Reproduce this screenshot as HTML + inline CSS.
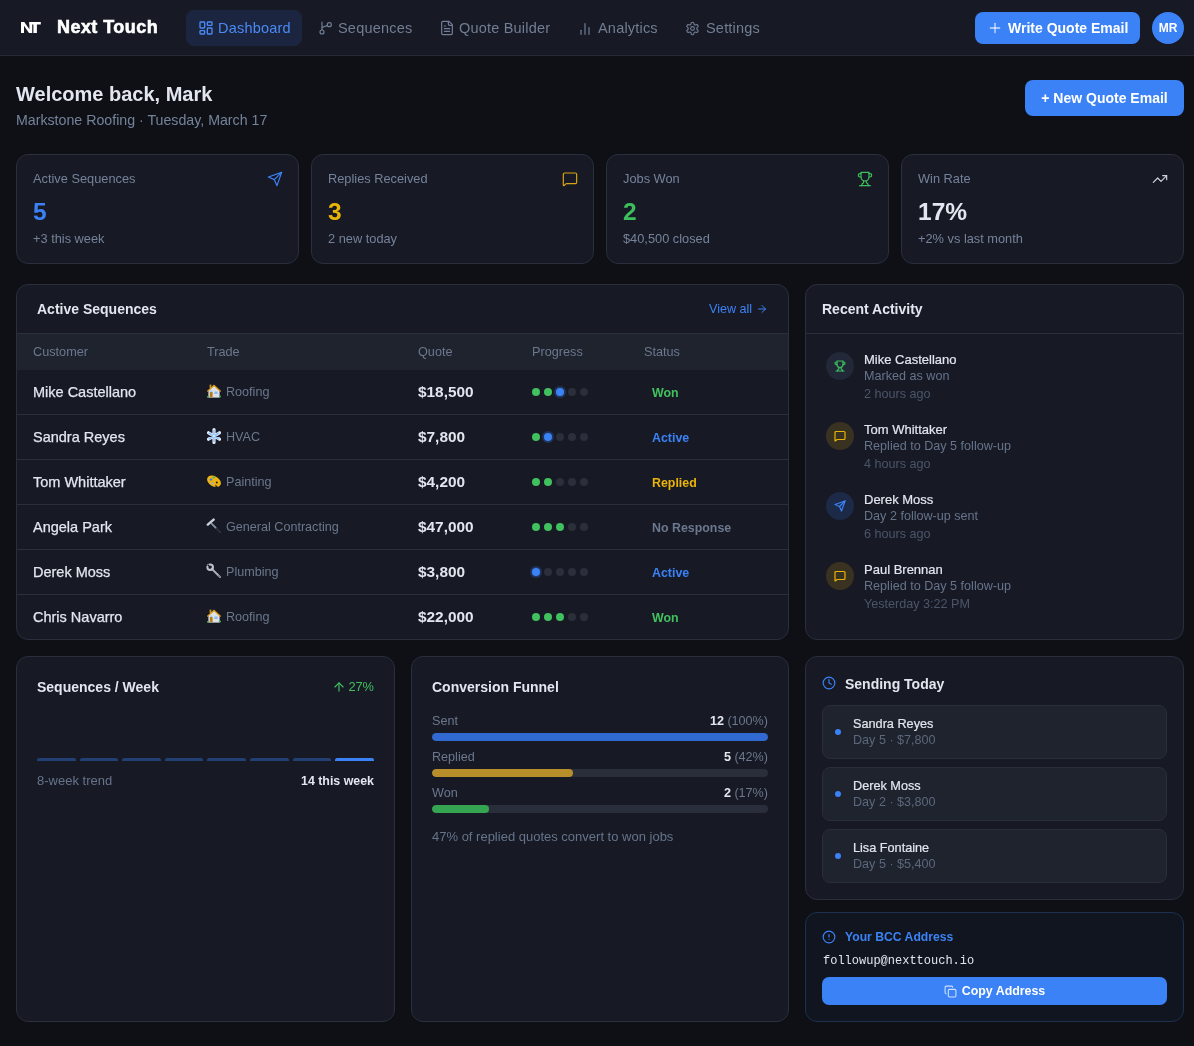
<!DOCTYPE html>
<html><head><meta charset="utf-8"><style>
*{box-sizing:border-box;margin:0;padding:0}
html,body{width:1194px;height:1046px;overflow:hidden}
body{will-change:transform;background:#0e1016;font-family:"Liberation Sans",sans-serif;color:#e2e6ee;position:relative}
svg{display:block}
.a{position:absolute;white-space:nowrap}
#hdr{position:absolute;left:0;top:0;width:1194px;height:56px;background:#171925;border-bottom:1px solid #262a36}
.nav{position:absolute;top:10px;height:36px;border-radius:8px;font-size:14.5px;color:#717e94;white-space:nowrap;letter-spacing:0.2px}
.nav svg{position:absolute;left:12px;top:10px}
.nav span{position:absolute;left:32px;top:8px;line-height:20px}
.nav.act{background:#1b2540;color:#4a8af5}
.btn{position:absolute;background:#3b82f6;color:#fff;font-weight:700;border-radius:8px;display:flex;align-items:center;justify-content:center;white-space:nowrap}
.card{position:absolute;background:#171925;border:1px solid #292f3d;border-radius:12px;overflow:hidden}
.stat .lbl{position:absolute;left:16px;top:16px;font-size:12.8px;line-height:16px;color:#75839a;white-space:nowrap}
.stat .ico{position:absolute;right:15px;top:16px}
.stat .val{position:absolute;left:16px;top:41px;font-size:24.5px;line-height:32px;font-weight:700}
.stat .sub{position:absolute;left:16px;top:76px;font-size:12.8px;line-height:16px;color:#75839a;white-space:nowrap}
.ttl{font-size:14px;line-height:20px;font-weight:700;color:#e2e6ee;white-space:nowrap}
.thdr{position:absolute;left:0;top:0;width:100%;height:49px;border-bottom:1px solid #292f3d}
.thead{position:absolute;left:0;top:49px;width:100%;height:36px;background:#1f232e;font-size:12.7px;color:#6b788d}
.thead span{position:absolute;top:10px;line-height:16px;white-space:nowrap}
.row{position:absolute;left:0;width:100%;height:45px;border-top:1px solid #292f3d}
.row.first{border-top:none;height:44px}
.row .nm{position:absolute;left:16px;top:12px;font-size:14.5px;line-height:20px;color:#e2e6ee;-webkit-text-stroke:0.25px #e2e6ee;white-space:nowrap}
.row .tr{position:absolute;left:190px;top:14px;font-size:12.6px;line-height:16px;color:#6b788d;white-space:nowrap}
.row .tr svg{position:absolute;left:-1px;top:-1px}
.row .tr span{position:absolute;left:19px;top:0}
.row .q{position:absolute;left:401px;top:12px;font-size:15.4px;line-height:20px;font-weight:700;color:#e2e6ee;white-space:nowrap}
.row .pr{position:absolute;left:515px;top:18px;display:flex}
.dot{width:8px;height:8px;border-radius:50%;background:#2b2f3b;margin-right:4px}
.dot.g{background:#41c05e}
.dot.b{background:#3b82f6;box-shadow:0 0 0 2px rgba(59,130,246,0.25)}
.row .st{position:absolute;left:635px;top:15px;font-size:12.4px;line-height:16px;font-weight:700;white-space:nowrap}
.aitem{position:absolute;left:20px;width:330px;height:56px}
.aitem .circ{position:absolute;left:0;top:0;width:28px;height:28px;border-radius:50%;display:flex;align-items:center;justify-content:center}
.aitem .an{position:absolute;left:38px;top:-1px;font-size:13px;line-height:18px;color:#e2e6ee;-webkit-text-stroke:0.2px #e2e6ee;white-space:nowrap}
.aitem .ad{position:absolute;left:38px;top:16px;font-size:12.6px;line-height:16px;color:#66748a;white-space:nowrap}
.aitem .at{position:absolute;left:38px;top:34px;font-size:12.6px;line-height:16px;color:#4b5669;white-space:nowrap}
.bcard{top:656px;height:366px}
.sitem{position:absolute;left:16px;width:345px;height:54px;background:#1f232e;border:1px solid #2a2e3a;border-radius:8px}
.sitem .sd{position:absolute;left:12px;top:23px;width:6px;height:6px;border-radius:50%;background:#3b82f6}
.sitem .sn{position:absolute;left:30px;top:9px;font-size:12.7px;line-height:18px;color:#e2e6ee;-webkit-text-stroke:0.2px #e2e6ee;white-space:nowrap}
.sitem .ss{position:absolute;left:30px;top:26px;font-size:12.6px;line-height:16px;color:#5b687c;white-space:nowrap}
.flbl{position:absolute;left:20px;font-size:12.6px;line-height:16px;color:#6b788d;white-space:nowrap}
.fval{position:absolute;right:20px;font-size:12.6px;line-height:16px;color:#6b788d;white-space:nowrap}
.fval b{color:#e2e6ee}
.ftrack{position:absolute;left:20px;width:336px;height:8px;border-radius:4px;background:#2a2e3a;overflow:hidden}
.ftrack div{height:8px;border-radius:4px}
.wbar{position:absolute;top:101px;width:38.6px;height:3px;border-radius:2px 2px 0 0;background:#234075}
</style></head><body>
<div id="hdr">
<svg class="a" style="left:21px;top:22px" width="20" height="11" viewBox="0 0 20 11"><path fill="#fff" d="M0 0H3.3L8.4 7.2V0H11.2V11H8L3 3.8V11H0Z"/><path fill="#fff" d="M8.4 0H19.8V2.6H15.9V11H12.4V2.6H8.4Z"/></svg>
<div class="a" style="left:57px;top:17px;font-size:18px;line-height:20px;font-weight:700;color:#fff;letter-spacing:0.45px;-webkit-text-stroke:0.6px #fff">Next Touch</div>
<div class="nav act" style="left:186px;width:116px"><svg width="16" height="16" viewBox="0 0 24 24" fill="none" stroke="currentColor" stroke-width="2" stroke-linecap="round" stroke-linejoin="round" style=""><rect x="3" y="3" width="7" height="9" rx="1"/><rect x="14" y="3" width="7" height="5" rx="1"/><rect x="14" y="12" width="7" height="9" rx="1"/><rect x="3" y="16" width="7" height="5" rx="1"/></svg><span>Dashboard</span></div>
<div class="nav" style="left:306px;width:116px"><svg width="16" height="16" viewBox="0 0 24 24" fill="none" stroke="currentColor" stroke-width="1.8" stroke-linecap="round" stroke-linejoin="round" style=""><line x1="6" y1="3" x2="6" y2="15"/><circle cx="6" cy="18" r="3"/><circle cx="17" cy="7" r="3"/><path d="M14.2 8.4C11 9.2 7.6 9.8 6 11.6"/></svg><span>Sequences</span></div>
<div class="nav" style="left:427px;width:136px"><svg width="16" height="16" viewBox="0 0 24 24" fill="none" stroke="currentColor" stroke-width="1.8" stroke-linecap="round" stroke-linejoin="round" style=""><path d="M15 2H6a2 2 0 0 0-2 2v16a2 2 0 0 0 2 2h12a2 2 0 0 0 2-2V7Z"/><path d="M14 2v4a2 2 0 0 0 2 2h4"/><path d="M10 9H8"/><path d="M16 13H8"/><path d="M16 17H8"/></svg><span>Quote Builder</span></div>
<div class="nav" style="left:566px;width:106px"><svg width="16" height="16" viewBox="0 0 24 24" fill="none" stroke="currentColor" stroke-width="1.8" stroke-linecap="round" stroke-linejoin="round" style="margin-left:-1px;margin-top:0.5px"><line x1="18" y1="20" x2="18" y2="10"/><line x1="12" y1="20" x2="12" y2="4"/><line x1="6" y1="20" x2="6" y2="14"/></svg><span>Analytics</span></div>
<div class="nav" style="left:674px;width:100px"><svg width="15" height="15" viewBox="0 0 24 24" fill="none" stroke="currentColor" stroke-width="1.8" stroke-linecap="round" stroke-linejoin="round" style="margin-left:-1px;margin-top:0.5px"><path d="M12.22 2h-.44a2 2 0 0 0-2 2v.18a2 2 0 0 1-1 1.73l-.43.25a2 2 0 0 1-2 0l-.15-.08a2 2 0 0 0-2.73.73l-.22.38a2 2 0 0 0 .73 2.73l.15.1a2 2 0 0 1 1 1.72v.51a2 2 0 0 1-1 1.74l-.15.09a2 2 0 0 0-.73 2.73l.22.38a2 2 0 0 0 2.73.73l.15-.08a2 2 0 0 1 2 0l.43.25a2 2 0 0 1 1 1.73V20a2 2 0 0 0 2 2h.44a2 2 0 0 0 2-2v-.18a2 2 0 0 1 1-1.73l.43-.25a2 2 0 0 1 2 0l.15.08a2 2 0 0 0 2.73-.73l.22-.39a2 2 0 0 0-.73-2.73l-.15-.08a2 2 0 0 1-1-1.74v-.5a2 2 0 0 1 1-1.74l.15-.09a2 2 0 0 0 .73-2.73l-.22-.38a2 2 0 0 0-2.73-.73l-.15.08a2 2 0 0 1-2 0l-.43-.25a2 2 0 0 1-1-1.73V4a2 2 0 0 0-2-2z"/><circle cx="12" cy="12" r="3"/></svg><span>Settings</span></div>
<div class="btn" style="left:975px;top:12px;width:165px;height:32px;justify-content:flex-start;padding-left:12px;font-size:14px"><svg width="16" height="16" viewBox="0 0 24 24" fill="none" stroke="rgba(255,255,255,0.72)" stroke-width="2" stroke-linecap="round" stroke-linejoin="round" style=""><path d="M5 12h14"/><path d="M12 5v14"/></svg><span style="margin-left:5px">Write Quote Email</span></div>
<div class="a" style="left:1152px;top:12px;width:32px;height:32px;border-radius:50%;background:#3b82f6;color:#fff;font-size:12px;font-weight:700;display:flex;align-items:center;justify-content:center">MR</div>
</div>
<div class="a" style="left:16px;top:80px;font-size:20px;line-height:28px;font-weight:700;color:#e2e6ee">Welcome back, Mark</div>
<div class="a" style="left:16px;top:110px;font-size:14.2px;line-height:20px;color:#75839a">Markstone Roofing · Tuesday, March 17</div>
<div class="btn" style="left:1025px;top:80px;width:159px;height:36px;font-size:14px">+ New Quote Email</div>
<div class="card stat" style="left:16px;top:154px;width:283px;height:110px"><div class="lbl">Active Sequences</div><div class="ico"><svg width="16" height="16" viewBox="0 0 24 24" fill="none" stroke="#3b82f6" stroke-width="1.8" stroke-linecap="round" stroke-linejoin="round" style=""><path d="m22 2-7 20-4-9-9-4Z"/><path d="M22 2 11 13"/></svg></div><div class="val" style="color:#3b82f6">5</div><div class="sub">+3 this week</div></div>
<div class="card stat" style="left:311px;top:154px;width:283px;height:110px"><div class="lbl">Replies Received</div><div class="ico"><svg width="16" height="16" viewBox="0 0 24 24" fill="none" stroke="#d9a514" stroke-width="1.8" stroke-linecap="round" stroke-linejoin="round" style=""><path d="M22 17a2 2 0 0 1-2 2H6.828a2 2 0 0 0-1.414.586l-2.202 2.202A.71.71 0 0 1 2 21.286V5a2 2 0 0 1 2-2h16a2 2 0 0 1 2 2z"/></svg></div><div class="val" style="color:#eab308">3</div><div class="sub">2 new today</div></div>
<div class="card stat" style="left:606px;top:154px;width:283px;height:110px"><div class="lbl">Jobs Won</div><div class="ico"><svg width="16" height="16" viewBox="0 0 24 24" fill="none" stroke="#3dbf5c" stroke-width="1.8" stroke-linecap="round" stroke-linejoin="round" style=""><path d="M6 9H4.5a2.5 2.5 0 0 1 0-5H6"/><path d="M18 9h1.5a2.5 2.5 0 0 0 0-5H18"/><path d="M4 22h16"/><path d="M10 14.66V17c0 .55-.47.98-.97 1.21C7.85 18.75 7 20.24 7 22"/><path d="M14 14.66V17c0 .55.47.98.97 1.21C16.15 18.75 17 20.24 17 22"/><path d="M18 2H6v7a6 6 0 0 0 12 0V2Z"/></svg></div><div class="val" style="color:#3dbf5c">2</div><div class="sub">$40,500 closed</div></div>
<div class="card stat" style="left:901px;top:154px;width:283px;height:110px"><div class="lbl">Win Rate</div><div class="ico"><svg width="16" height="16" viewBox="0 0 24 24" fill="none" stroke="#cbd2dc" stroke-width="1.8" stroke-linecap="round" stroke-linejoin="round" style=""><polyline points="22 7 13.5 15.5 8.5 10.5 2 17"/><polyline points="16 7 22 7 22 13"/></svg></div><div class="val" style="color:#e2e6ee">17%</div><div class="sub">+2% vs last month</div></div>
<div class="card" style="left:16px;top:284px;width:773px;height:356px">
<div class="thdr"><div class="a ttl" style="left:20px;top:14px">Active Sequences</div><div class="a" style="left:692px;top:16px;font-size:12.6px;line-height:16px;color:#3b82f6;display:flex;align-items:center">View all<svg width="12" height="12" viewBox="0 0 24 24" fill="none" stroke="currentColor" stroke-width="2" stroke-linecap="round" stroke-linejoin="round" style="margin-left:4px"><path d="M5 12h14"/><path d="m12 5 7 7-7 7"/></svg></div></div>
<div class="thead"><span style="left:16px">Customer</span><span style="left:190px">Trade</span><span style="left:401px">Quote</span><span style="left:515px">Progress</span><span style="left:627px">Status</span></div>
<div class="row first" style="top:85px"><div class="nm">Mike Castellano</div><div class="tr"><svg width="16" height="16" viewBox="0 0 16 16"><rect x="3.6" y="1.6" width="1.8" height="3.4" fill="#c9901a"/><path d="M2.4 7.2L8 2.6 13.6 7.2V14.6H2.4Z" fill="#dfe1e6"/><path d="M0.9 8.1L8 1.6 15.1 8.1 14.2 8.9 8 3.3 1.8 8.9Z" fill="#d49a16"/><rect x="3.8" y="9" width="2.8" height="5.6" fill="#b57a14"/><circle cx="5.2" cy="8.3" r="0.9" fill="#8ec3ff"/><rect x="8.4" y="8.6" width="3.2" height="2.4" fill="#84b9f6"/><ellipse cx="1.9" cy="13.8" rx="1.1" ry="0.9" fill="#3fb24f"/><ellipse cx="14" cy="13.4" rx="1.1" ry="0.9" fill="#3fb24f"/><rect x="2.4" y="14.4" width="11.2" height="0.6" fill="#9aa3b0"/></svg><span>Roofing</span></div><div class="q">$18,500</div><div class="pr"><div class="dot g"></div><div class="dot g"></div><div class="dot b"></div><div class="dot "></div><div class="dot "></div></div><div class="st" style="color:#41c05e">Won</div></div>
<div class="row" style="top:129px"><div class="nm">Sandra Reyes</div><div class="tr"><svg width="16" height="16" viewBox="0 0 16 16"><g stroke="#e6edf6" stroke-width="3.2" stroke-linecap="round"><path d="M8 1.6v12.8M2.5 4.8l11 6.4M2.5 11.2l11-6.4"/></g><g stroke="#8fc1f8" stroke-width="1.6" stroke-linecap="round"><path d="M8 2.6v10.8M3.3 5.3l9.4 5.4M3.3 10.7l9.4-5.4"/></g><circle cx="8" cy="8" r="2.2" fill="#9cc9f7"/><circle cx="8" cy="8" r="1" fill="#e8eef6"/></svg><span>HVAC</span></div><div class="q">$7,800</div><div class="pr"><div class="dot g"></div><div class="dot b"></div><div class="dot "></div><div class="dot "></div><div class="dot "></div></div><div class="st" style="color:#3b82f6">Active</div></div>
<div class="row" style="top:174px"><div class="nm">Tom Whittaker</div><div class="tr"><svg width="16" height="16" viewBox="0 0 16 16"><ellipse cx="8" cy="8.3" rx="7.4" ry="5" transform="rotate(30 8 8.3)" fill="#efb20f"/><circle cx="10.8" cy="9.6" r="1" fill="#161922"/><path d="M9.6 11.4 L12.2 14.6 9.2 13.4Z" fill="#161922"/><ellipse cx="5" cy="6.6" rx="1.4" ry="1.1" fill="#2f7ff0"/><ellipse cx="7.8" cy="4.4" rx="1.4" ry="0.9" fill="#36c15a"/><ellipse cx="6.4" cy="10.4" rx="1.5" ry="1.1" fill="#a7b0bd"/></svg><span>Painting</span></div><div class="q">$4,200</div><div class="pr"><div class="dot g"></div><div class="dot g"></div><div class="dot "></div><div class="dot "></div><div class="dot "></div></div><div class="st" style="color:#eab308">Replied</div></div>
<div class="row" style="top:219px"><div class="nm">Angela Park</div><div class="tr"><svg width="16" height="16" viewBox="0 0 16 16"><path d="M6.4 6.4L14.2 14.2" stroke="#2a2f3b" stroke-width="2" stroke-linecap="round"/><path d="M5.8 5.8L9.6 9.6" stroke="#8391a4" stroke-width="1.8" stroke-linecap="round"/><path d="M1.8 6.6L7.6 1.6" stroke="#cdd2da" stroke-width="2.4" stroke-linecap="round"/></svg><span>General Contracting</span></div><div class="q">$47,000</div><div class="pr"><div class="dot g"></div><div class="dot g"></div><div class="dot g"></div><div class="dot "></div><div class="dot "></div></div><div class="st" style="color:#6b788d">No Response</div></div>
<div class="row" style="top:264px"><div class="nm">Derek Moss</div><div class="tr"><svg width="16" height="16" viewBox="0 0 16 16"><path d="M5.6 5.6L14 14" stroke="#aab2be" stroke-width="2" stroke-linecap="round"/><circle cx="4.2" cy="4.2" r="2.8" fill="none" stroke="#bcc3cd" stroke-width="2"/><path d="M1.2 2.6L4.2 4.6 2.6 1.2Z" fill="#161922"/><path d="M12.4 12.4L14.2 14.2" stroke="#6a7585" stroke-width="1.4"/></svg><span>Plumbing</span></div><div class="q">$3,800</div><div class="pr"><div class="dot b"></div><div class="dot "></div><div class="dot "></div><div class="dot "></div><div class="dot "></div></div><div class="st" style="color:#3b82f6">Active</div></div>
<div class="row" style="top:309px"><div class="nm">Chris Navarro</div><div class="tr"><svg width="16" height="16" viewBox="0 0 16 16"><rect x="3.6" y="1.6" width="1.8" height="3.4" fill="#c9901a"/><path d="M2.4 7.2L8 2.6 13.6 7.2V14.6H2.4Z" fill="#dfe1e6"/><path d="M0.9 8.1L8 1.6 15.1 8.1 14.2 8.9 8 3.3 1.8 8.9Z" fill="#d49a16"/><rect x="3.8" y="9" width="2.8" height="5.6" fill="#b57a14"/><circle cx="5.2" cy="8.3" r="0.9" fill="#8ec3ff"/><rect x="8.4" y="8.6" width="3.2" height="2.4" fill="#84b9f6"/><ellipse cx="1.9" cy="13.8" rx="1.1" ry="0.9" fill="#3fb24f"/><ellipse cx="14" cy="13.4" rx="1.1" ry="0.9" fill="#3fb24f"/><rect x="2.4" y="14.4" width="11.2" height="0.6" fill="#9aa3b0"/></svg><span>Roofing</span></div><div class="q">$22,000</div><div class="pr"><div class="dot g"></div><div class="dot g"></div><div class="dot g"></div><div class="dot "></div><div class="dot "></div></div><div class="st" style="color:#41c05e">Won</div></div>
</div>
<div class="card" style="left:805px;top:284px;width:379px;height:356px">
<div class="thdr"><div class="a ttl" style="left:16px;top:14px">Recent Activity</div></div>
<div class="aitem" style="top:67px"><div class="circ" style="background:#222837"><svg width="12" height="12" viewBox="0 0 24 24" fill="none" stroke="#3dbf5c" stroke-width="2.4" stroke-linecap="round" stroke-linejoin="round" style=""><path d="M6 9H4.5a2.5 2.5 0 0 1 0-5H6"/><path d="M18 9h1.5a2.5 2.5 0 0 0 0-5H18"/><path d="M4 22h16"/><path d="M10 14.66V17c0 .55-.47.98-.97 1.21C7.85 18.75 7 20.24 7 22"/><path d="M14 14.66V17c0 .55.47.98.97 1.21C16.15 18.75 17 20.24 17 22"/><path d="M18 2H6v7a6 6 0 0 0 12 0V2Z"/></svg></div><div class="an">Mike Castellano</div><div class="ad">Marked as won</div><div class="at">2 hours ago</div></div>
<div class="aitem" style="top:137px"><div class="circ" style="background:#3a3220"><svg width="12" height="12" viewBox="0 0 24 24" fill="none" stroke="#eab308" stroke-width="2.4" stroke-linecap="round" stroke-linejoin="round" style=""><path d="M22 17a2 2 0 0 1-2 2H6.828a2 2 0 0 0-1.414.586l-2.202 2.202A.71.71 0 0 1 2 21.286V5a2 2 0 0 1 2-2h16a2 2 0 0 1 2 2z"/></svg></div><div class="an">Tom Whittaker</div><div class="ad">Replied to Day 5 follow-up</div><div class="at">4 hours ago</div></div>
<div class="aitem" style="top:207px"><div class="circ" style="background:#1c2a47"><svg width="12" height="12" viewBox="0 0 24 24" fill="none" stroke="#3b82f6" stroke-width="2.4" stroke-linecap="round" stroke-linejoin="round" style=""><path d="m22 2-7 20-4-9-9-4Z"/><path d="M22 2 11 13"/></svg></div><div class="an">Derek Moss</div><div class="ad">Day 2 follow-up sent</div><div class="at">6 hours ago</div></div>
<div class="aitem" style="top:277px"><div class="circ" style="background:#3a3220"><svg width="12" height="12" viewBox="0 0 24 24" fill="none" stroke="#eab308" stroke-width="2.4" stroke-linecap="round" stroke-linejoin="round" style=""><path d="M22 17a2 2 0 0 1-2 2H6.828a2 2 0 0 0-1.414.586l-2.202 2.202A.71.71 0 0 1 2 21.286V5a2 2 0 0 1 2-2h16a2 2 0 0 1 2 2z"/></svg></div><div class="an">Paul Brennan</div><div class="ad">Replied to Day 5 follow-up</div><div class="at">Yesterday 3:22 PM</div></div>
</div>
<div class="card bcard" style="left:16px;width:379px">
<div class="a ttl" style="left:20px;top:20px">Sequences / Week</div>
<div class="a" style="right:20px;top:22px;font-size:12.8px;line-height:16px;color:#41c05e;display:flex;align-items:center"><svg width="14" height="14" viewBox="0 0 24 24" fill="none" stroke="currentColor" stroke-width="2" stroke-linecap="round" stroke-linejoin="round" style="margin-right:2px"><path d="m5 12 7-7 7 7"/><path d="M12 19V5"/></svg>27%</div>
<div class="wbar" style="left:20.0px"></div>
<div class="wbar" style="left:62.6px"></div>
<div class="wbar" style="left:105.2px"></div>
<div class="wbar" style="left:147.8px"></div>
<div class="wbar" style="left:190.4px"></div>
<div class="wbar" style="left:233.0px"></div>
<div class="wbar" style="left:275.6px"></div>
<div class="wbar" style="left:318.2px;background:#3b82f6"></div>
<div class="a" style="left:20px;top:116px;font-size:13px;line-height:16px;color:#66748a">8-week trend</div>
<div class="a" style="right:20px;top:116px;font-size:12.4px;line-height:16px;font-weight:700;color:#e2e6ee">14 this week</div>
</div>
<div class="card bcard" style="left:411px;width:378px">
<div class="a ttl" style="left:20px;top:20px">Conversion Funnel</div>
<div class="flbl" style="top:56px">Sent</div><div class="fval" style="top:56px"><b>12</b> (100%)</div><div class="ftrack" style="top:76px"><div style="width:100%;background:#306ad0"></div></div>
<div class="flbl" style="top:92px">Replied</div><div class="fval" style="top:92px"><b>5</b> (42%)</div><div class="ftrack" style="top:112px"><div style="width:42%;background:#b88e2a"></div></div>
<div class="flbl" style="top:128px">Won</div><div class="fval" style="top:128px"><b>2</b> (17%)</div><div class="ftrack" style="top:148px"><div style="width:17%;background:#35a552"></div></div>
<div class="a" style="left:20px;top:171px;font-size:13px;line-height:18px;color:#66748a">47% of replied quotes convert to won jobs</div>
</div>
<div class="card" style="left:805px;top:656px;width:379px;height:244px">
<div class="a" style="left:16px;top:19px"><svg width="14" height="14" viewBox="0 0 24 24" fill="none" stroke="#3b82f6" stroke-width="2" stroke-linecap="round" stroke-linejoin="round" style=""><circle cx="12" cy="12" r="10"/><polyline points="12 6 12 12 16 14"/></svg></div>
<div class="a ttl" style="left:39px;top:17px">Sending Today</div>
<div class="sitem" style="top:48px"><div class="sd"></div><div class="sn">Sandra Reyes</div><div class="ss">Day 5 · $7,800</div></div>
<div class="sitem" style="top:110px"><div class="sd"></div><div class="sn">Derek Moss</div><div class="ss">Day 2 · $3,800</div></div>
<div class="sitem" style="top:172px"><div class="sd"></div><div class="sn">Lisa Fontaine</div><div class="ss">Day 5 · $5,400</div></div>
</div>
<div class="card" style="left:805px;top:912px;width:379px;height:110px;background:#11151f;border-color:#1d3050">
<div class="a" style="left:16px;top:17px"><svg width="14" height="14" viewBox="0 0 24 24" fill="none" stroke="#3b82f6" stroke-width="2" stroke-linecap="round" stroke-linejoin="round" style=""><circle cx="12" cy="12" r="10"/><line x1="12" y1="8" x2="12" y2="12"/><line x1="12" y1="16" x2="12.01" y2="16"/></svg></div>
<div class="a" style="left:39px;top:16px;font-size:12.2px;line-height:16px;font-weight:700;color:#3b82f6">Your BCC Address</div>
<div class="a" style="left:17px;top:40px;font-family:'Liberation Mono',monospace;font-size:12px;line-height:16px;color:#e2e6ee">followup@nexttouch.io</div>
<div class="a" style="left:16px;top:64px;width:345px;height:28px;border-radius:7px;background:#3b82f6;color:#fff;font-size:12.4px;font-weight:700;display:flex;align-items:center;justify-content:center"><svg width="13" height="13" viewBox="0 0 24 24" fill="none" stroke="rgba(255,255,255,0.75)" stroke-width="2" stroke-linecap="round" stroke-linejoin="round" style="margin-right:5px"><rect x="8" y="8" width="14" height="14" rx="2"/><path d="M4 16c-1.1 0-2-.9-2-2V4c0-1.1.9-2 2-2h10c1.1 0 2 .9 2 2"/></svg>Copy Address</div>
</div>
</body></html>
